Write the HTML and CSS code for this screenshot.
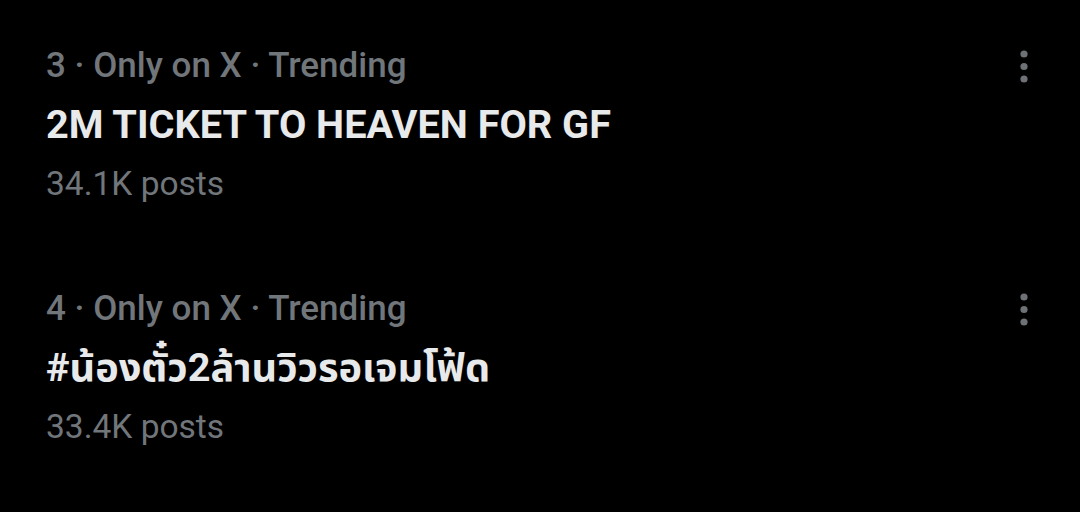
FILE: index.html
```html
<!DOCTYPE html>
<html lang="en">

<head>
  <meta charset="UTF-8" />
  <title>Trending</title>
  <link rel="stylesheet" href="styles.css">
</head>

<body>
  <!-- Trend list -->
  <div class="trends">
    <div class="trend">
      <div class="trend-body">
        <div class="trend-meta">3 · Only on X · Trending</div>
        <div class="trend-title">2M TICKET TO HEAVEN FOR GF</div>
        <div class="trend-count">34.1K posts</div>
      </div>
      <button class="more-btn" aria-label="More">
        <svg viewBox="0 0 8 33" width="8" height="33">
          <circle cx="4" cy="4" r="3.6" />
          <circle cx="4" cy="16.5" r="3.6" />
          <circle cx="4" cy="29" r="3.6" />
        </svg>
      </button>
    </div>

    <div class="trend">
      <div class="trend-body">
        <div class="trend-meta">4 · Only on X · Trending</div>
        <div class="trend-title" lang="th">#น้องตั๋ว2ล้านวิวรอเจมโฟ้ด</div>
        <div class="trend-count">33.4K posts</div>
      </div>
      <button class="more-btn" aria-label="More">
        <svg viewBox="0 0 8 33" width="8" height="33">
          <circle cx="4" cy="4" r="3.6" />
          <circle cx="4" cy="16.5" r="3.6" />
          <circle cx="4" cy="29" r="3.6" />
        </svg>
      </button>
    </div>
  </div>
</body>

</html>
```

FILE: styles.css
```css
/* --- Variables --- */
:root {
  --bg: #000000;
  --text-primary: #e7e9ea;
  --text-secondary: #71767b;
  --icon: #6e7175;
}

/* --- Base --- */
body {
  margin: 0;
  background: var(--bg);
  font-family: Roboto, "Noto Sans Thai", "Noto Sans", sans-serif;
}

/* --- Trend list --- */
.trends {
  display: flex;
  flex-direction: column;
  padding-top: 3px;
}

.trend {
  display: flex;
  align-items: flex-start;
  justify-content: space-between;
  padding: 33px 46px;
}

.trend-body {
  display: flex;
  flex-direction: column;
}

.trend-meta {
  color: var(--text-secondary);
  font-size: 35px;
  font-weight: 500;
  line-height: 59px;
}

.trend-title {
  color: var(--text-primary);
  font-size: 39.7px;
  font-weight: 700;
  line-height: 59px;
}

.trend-count {
  color: var(--text-secondary);
  font-size: 33.5px;
  line-height: 59px;
}

/* --- More button --- */
.more-btn {
  background: none;
  border: none;
  padding: 0;
  margin: 14px 6px 0 0;
  cursor: pointer;
}

.more-btn svg {
  display: block;
  fill: var(--icon);
}
```
